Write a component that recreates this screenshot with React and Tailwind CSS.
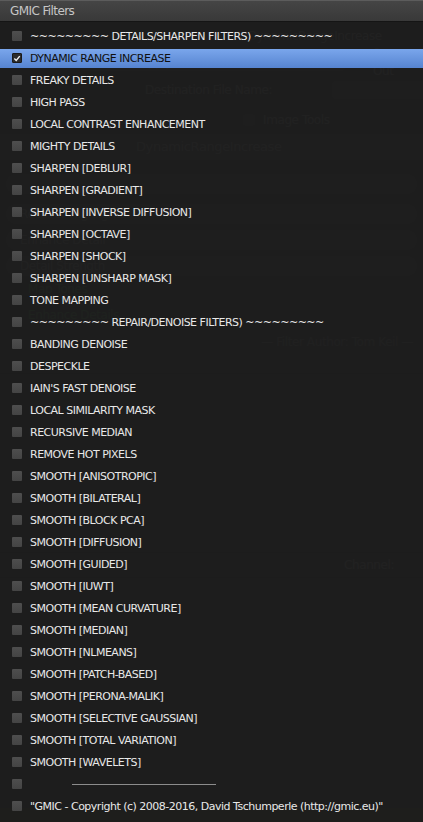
import React from "react";

const ITEMS = [
  "~~~~~~~~~ DETAILS/SHARPEN FILTERS) ~~~~~~~~~",
  "DYNAMIC RANGE INCREASE",
  "FREAKY DETAILS",
  "HIGH PASS",
  "LOCAL CONTRAST ENHANCEMENT",
  "MIGHTY DETAILS",
  "SHARPEN [DEBLUR]",
  "SHARPEN [GRADIENT]",
  "SHARPEN [INVERSE DIFFUSION]",
  "SHARPEN [OCTAVE]",
  "SHARPEN [SHOCK]",
  "SHARPEN [UNSHARP MASK]",
  "TONE MAPPING",
  "~~~~~~~~~ REPAIR/DENOISE FILTERS) ~~~~~~~~~",
  "BANDING DENOISE",
  "DESPECKLE",
  "IAIN'S FAST DENOISE",
  "LOCAL SIMILARITY MASK",
  "RECURSIVE MEDIAN",
  "REMOVE HOT PIXELS",
  "SMOOTH [ANISOTROPIC]",
  "SMOOTH [BILATERAL]",
  "SMOOTH [BLOCK PCA]",
  "SMOOTH [DIFFUSION]",
  "SMOOTH [GUIDED]",
  "SMOOTH [IUWT]",
  "SMOOTH [MEAN CURVATURE]",
  "SMOOTH [MEDIAN]",
  "SMOOTH [NLMEANS]",
  "SMOOTH [PATCH-BASED]",
  "SMOOTH [PERONA-MALIK]",
  "SMOOTH [SELECTIVE GAUSSIAN]",
  "SMOOTH [TOTAL VARIATION]",
  "SMOOTH [WAVELETS]",
  "---",
  "\"GMIC - Copyright (c) 2008-2016, David Tschumperle (http://gmic.eu)\"",
];

const font = { fontFamily: '"DejaVu Sans", "Liberation Sans", sans-serif' };

function Check({ on }) {
  return (
    <div className={`w-[10px] h-[10px] rounded-[1px] shrink-0 flex items-center justify-center ${on ? "bg-[#2c2c2c] border border-[#1a1a1a]" : "bg-gradient-to-b from-[#4e4e4e] to-[#444444]"}`}>
      {on && (
        <svg width="9" height="9" viewBox="0 0 9 9">
          <path d="M1.5 4.6 L3.6 6.8 L7.6 1.8" fill="none" stroke="#f2f2f2" strokeWidth="1.6" />
        </svg>
      )}
    </div>
  );
}

// faint blender panel seen through the menu
function Backdrop() {
  return (
    <div className="w-full h-full bg-[#262626] flex flex-col text-[12px] tracking-[-0.4px] text-[#474747]" style={font}>
      <div className="h-[22px]" />
      <div className="h-[28px] flex items-center pl-[248px] bg-[#232323]">DynamicRangeIncrease</div>
      <div className="h-[24px] flex items-center gap-2 pl-[80px]">
        <div className="w-[270px] h-[18px] rounded bg-[#2a2a2a] flex items-center pl-[60px]">Apply Filter Enabled</div>
        <div className="w-[12px] h-[12px] rounded-sm bg-[#2e2e2e]" />
        <span>Sync Out</span>
      </div>
      <div className="h-[32px] flex items-center pl-[145px] gap-[60px]">
        <span>Destination File Name:</span>
        <div className="flex-1 h-[18px] rounded-l bg-[#2a2a2a]" />
      </div>
      <div className="h-[28px] flex items-center pl-[243px] gap-2">
        <div className="w-[12px] h-[12px] rounded-sm bg-[#2e2e2e]" />
        <span>Image Tools</span>
      </div>
      <div className="h-[26px] flex items-center pl-[136px] bg-[#2b2b2b] text-[13px]">DynamicRangeIncrease</div>
      <div className="h-[14px]" />
      <div className="h-[20px] mx-[6px] rounded-full bg-[#2c2c2c]" />
      <div className="h-[10px]" />
      <div className="h-[20px] mx-[6px] rounded-full bg-[#2c2c2c] flex items-center pl-[14px]">Recover Highlights</div>
      <div className="h-[6px]" />
      <div className="h-[20px] mx-[6px] rounded-full bg-[#2c2c2c] flex items-center pl-[14px]">Enhance Detail</div>
      <div className="h-[6px]" />
      <div className="h-[20px] mx-[6px] rounded-full bg-[#2c2c2c] flex items-center pl-[14px]">Detail Strength</div>
      <div className="h-[26px] flex items-center pl-[28px] text-[#2f4a2f]">Map Tones</div>
      <div className="h-[26px] flex items-center pl-[28px] text-[#2f4a2f]">Enhance Details</div>
      <div className="h-[28px] flex items-center justify-end pr-[10px] text-[#3c3c3c]">— Filter Author: Tom Keil —</div>
      <div className="h-[18px] border-b border-[#1c1c1c]" />
      <div className="flex-1 bg-[#222222]" />
      <div className="h-[26px] bg-[#232323] border-y border-[#1b1b1b] flex items-center pl-[330px]">
        <div className="flex-1 h-[18px] rounded-l-full bg-[#262626] flex items-center pl-[14px]">Channel:</div>
      </div>
      <div className="h-[230px] bg-[#222222]" />
      <div className="h-[14px] bg-[#2c2a1e]" />
    </div>
  );
}

export default function App() {
  return (
    <div className="w-[423px] h-[822px] relative overflow-hidden" style={font}>
      <Backdrop />
      <div className="absolute inset-0 flex flex-col bg-[#1d1d1d]/[0.88]">
        <div className="h-[22px] shrink-0 border-t border-[#5c5c5c] border-b border-b-[#151515] bg-gradient-to-b from-[#454545] to-[#393939] flex items-center pl-[10px] text-[12px] tracking-[-0.6px] text-[#c6c6c6]">
          GMIC Filters
        </div>
        <div className="h-[3px]" />
        {ITEMS.map((label, i) => {
          const active = i === 1;
          return (
            <div key={i} className="h-[22px] shrink-0 flex items-center">
              <div className={`w-full h-[19px] flex items-center pl-[12px] gap-[8px] ${active ? "bg-gradient-to-b from-[#7aa6ec] to-[#5684d0] text-[#101010]" : "text-[#e8e8e8]"}`}>
                <Check on={active} />
                {label === "---" ? (
                  <div className="ml-[42px] w-[144px] h-[1px] bg-[#8c8c8c]" />
                ) : (
                  <span className="text-[11px] leading-none tracking-[-0.5px] whitespace-nowrap">{label}</span>
                )}
              </div>
            </div>
          );
        })}
      </div>
    </div>
  );
}
